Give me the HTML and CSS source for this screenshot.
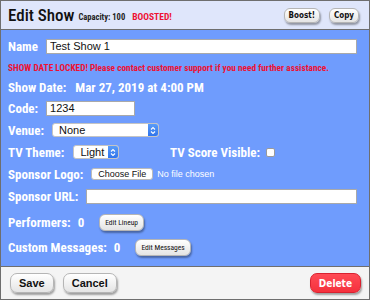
FILE: index.html
```html
<!DOCTYPE html>
<html lang="en">
<head>
  <meta charset="UTF-8">
  <meta name="viewport" content="width=device-width, initial-scale=1.0">
  <title>Edit Show</title>
  <link rel="stylesheet" href="styles.css">
</head>
<body>

  <div class="window">
    <div class="top-bar">
      <h1>Edit Show</h1>
      <span class="capacity">Capacity: 100</span>
      <span class="boosted">BOOSTED!</span>
      <div class="top-actions">
        <button class="btn btn-small">Boost!</button>
        <button class="btn btn-small">Copy</button>
      </div>
    </div>

    <div class="form">
      <div class="row row-name">
        <label for="name">Name</label>
        <input type="text" id="name" class="field field-wide" value="Test Show 1">
      </div>

      <div class="row row-warning">
        <p class="warning">SHOW DATE LOCKED! Please contact customer support if you need further assistance.</p>
      </div>

      <div class="row row-date">
        <span class="label">Show Date:</span>
        <span class="value">Mar 27, 2019 at 4:00 PM</span>
      </div>

      <div class="row">
        <label for="code">Code:</label>
        <input type="text" id="code" class="field field-code" value="1234">
      </div>

      <div class="row">
        <label>Venue:</label>
        <div class="select select-venue">
          <span class="select-text">None</span>
          <span class="select-arrow">
            <svg width="6" height="9" viewBox="0 0 6 9"><path d="M1 3.5 L3 1.5 L5 3.5 M1 5.5 L3 7.5 L5 5.5" fill="none" stroke="#fff" stroke-width="1.1"/></svg>
          </span>
        </div>
      </div>

      <div class="row">
        <div class="group theme-group">
          <label>TV Theme:</label>
          <div class="select select-theme">
            <span class="select-text">Light</span>
            <span class="select-arrow">
              <svg width="6" height="9" viewBox="0 0 6 9"><path d="M1 3.5 L3 1.5 L5 3.5 M1 5.5 L3 7.5 L5 5.5" fill="none" stroke="#fff" stroke-width="1.1"/></svg>
            </span>
          </div>
        </div>
        <div class="group score-group">
          <label for="score">TV Score Visible:</label>
          <span class="checkbox" id="score"></span>
        </div>
      </div>

      <div class="row">
        <label>Sponsor Logo:</label>
        <span class="file-button">Choose File</span>
        <span class="file-status">No file chosen</span>
      </div>

      <div class="row">
        <label for="url">Sponsor URL:</label>
        <input type="text" id="url" class="field field-url" value="">
      </div>

      <div class="row row-count row-performers">
        <span class="label">Performers:</span>
        <span class="count">0</span>
        <button class="btn btn-mini">Edit Lineup</button>
      </div>

      <div class="row row-count">
        <span class="label">Custom Messages:</span>
        <span class="count">0</span>
        <button class="btn btn-mini">Edit Messages</button>
      </div>
    </div>

    <div class="bottom-bar">
      <button class="btn btn-footer btn-save">Save</button>
      <button class="btn btn-footer btn-cancel">Cancel</button>
      <button class="btn btn-footer btn-delete">Delete</button>
    </div>
  </div>

</body>
</html>
```

FILE: styles.css
```css
body {
  margin: 0;
  padding: 0;
  font-family: 'Roboto Condensed', 'Liberation Sans Narrow', 'DejaVu Sans Condensed', Roboto, sans-serif;
}

.window {
  width: 370px;
  height: 300px;
  box-sizing: border-box;
  border: 1px solid #6e6e6e;
  display: flex;
  flex-direction: column;
  overflow: hidden;
}

/* header */
.top-bar {
  height: 28px;
  flex-shrink: 0;
  background-color: #dfe6fb;
  border-bottom: 1px solid #6e6e6e;
  display: flex;
  align-items: center;
  padding: 0 10px 0 7px;
}

h1 {
  margin: 0 4px 0 0;
  font-size: 17px;
  font-weight: 500;
  color: #111;
}

.capacity {
  font-size: 8.5px;
  font-weight: bold;
  color: #222;
  margin-top: 3px;
  margin-right: 7px;
}

.boosted {
  font-size: 9.5px;
  font-weight: bold;
  color: #ee1133;
  margin-top: 3px;
}

.top-actions {
  margin-left: auto;
  display: flex;
  gap: 9px;
}

/* buttons */
.btn {
  border: 1px solid #b5b5b5;
  border-radius: 6px;
  background: linear-gradient(#ffffff, #e4e4e4);
  box-shadow: 1px 2px 2px rgba(0, 0, 0, 0.35);
  color: #111;
  padding: 0;
  cursor: pointer;
}

.btn-small {
  height: 15px;
  padding: 0 4px;
  font-family: 'DejaVu Sans Condensed', 'DejaVu Sans', sans-serif;
  font-size: 8px;
  font-weight: bold;
}

.btn-mini {
  height: 17px;
  padding: 0 5px;
  font-family: 'Roboto Condensed', 'Liberation Sans Narrow', 'DejaVu Sans Condensed', Roboto, sans-serif;
  font-size: 7.5px;
  font-weight: normal;
}

.btn-footer {
  height: 20px;
  font-family: 'Liberation Sans', Arial, sans-serif;
  font-size: 11px;
  font-weight: bold;
  padding: 0 8px;
  border-radius: 7px;
}

.btn-delete {
  margin-left: auto;
  padding: 0 8px;
  background: linear-gradient(#ff4b55, #f5313d);
  border-color: #d82230;
  color: #fff;
  font-family: 'DejaVu Sans Condensed', 'DejaVu Sans', sans-serif;
  font-size: 10px;
}

/* form */
.form {
  flex: 1;
  background-color: #6f9cfd;
  padding: 6px 12px 0 7px;
  display: flex;
  flex-direction: column;
}

.row {
  height: 22px;
  display: flex;
  align-items: center;
  gap: 8px;
  color: #fff;
  font-size: 13px;
  font-weight: bold;
}

.row-name {
  height: 20px;
}

.row-date {
  height: 19px;
}

.row-count {
  height: 25px;
  gap: 7px;
}

.row-performers {
  margin-top: 3px;
}

.warning {
  margin: 0;
  color: #ee1133;
  font-size: 9.3px;
  font-weight: bold;
}

.value {
  margin-left: 1px;
}

.count {
  margin-right: 8px;
}

.field {
  height: 15px;
  box-sizing: border-box;
  border: 1px solid #a9a9a9;
  background: #fff;
  padding: 0 3px;
  font-family: 'Liberation Sans', Arial, sans-serif;
  font-size: 11px;
  color: #111;
  outline: none;
}

.field-wide {
  flex: 1;
}

.field-code {
  width: 89px;
}

.field-url {
  flex: 1;
}

.select {
  height: 14px;
  box-sizing: border-box;
  background: #fff;
  border: 1px solid #c4c4c4;
  border-radius: 3px;
  display: flex;
  align-items: center;
  font-family: 'Liberation Sans', Arial, sans-serif;
  font-size: 11px;
  font-weight: normal;
  color: #111;
  overflow: hidden;
}

.select-text {
  flex: 1;
  padding-left: 6px;
}

.select-arrow {
  width: 10px;
  height: 100%;
  background: linear-gradient(#5a9cf8, #2f74ec);
  display: flex;
  align-items: center;
  justify-content: center;
}

.select-venue {
  width: 107px;
}

.select-theme {
  width: 46px;
}

.group {
  display: flex;
  align-items: center;
  gap: 9px;
}

.theme-group {
  width: 154px;
}

.score-group {
  gap: 6px;
}

.checkbox {
  width: 9px;
  height: 9px;
  box-sizing: border-box;
  background: #fff;
  border: 1px solid #9a9a9a;
  border-radius: 2px;
}

.file-button {
  height: 12px;
  box-sizing: border-box;
  padding: 0 6px;
  background: #fff;
  border: 1px solid #bbb;
  border-radius: 3px;
  display: flex;
  align-items: center;
  font-family: 'Liberation Sans', Arial, sans-serif;
  font-size: 9px;
  font-weight: normal;
  color: #111;
}

.file-status {
  margin-left: -4px;
  font-family: 'Liberation Sans', Arial, sans-serif;
  font-size: 9px;
  font-weight: normal;
}

/* footer */
.bottom-bar {
  flex-shrink: 0;
  height: 33px;
  box-sizing: border-box;
  border-top: 1px solid #6e6e6e;
  background-color: #f4f4f4;
  display: flex;
  align-items: center;
  gap: 9px;
  padding: 0 8px 0 9px;
}
```
